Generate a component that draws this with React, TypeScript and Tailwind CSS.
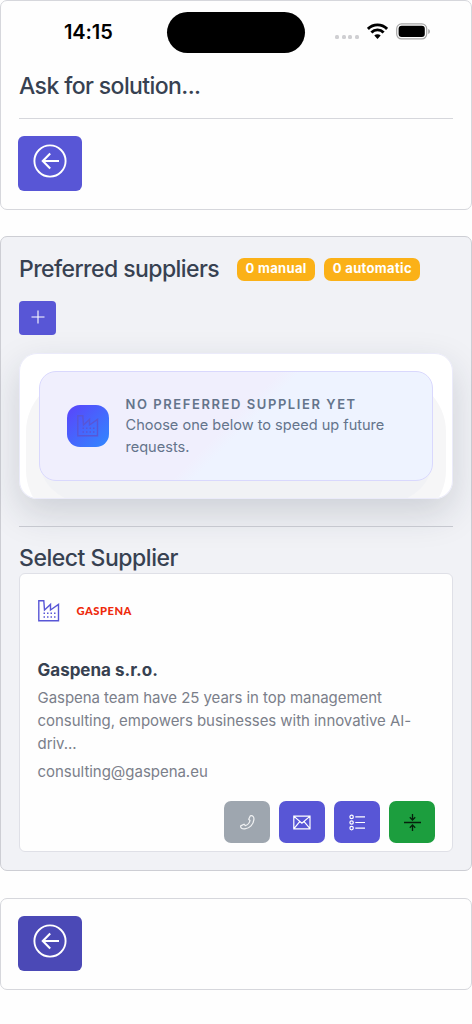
import React from 'react';

interface IconProps {
  className?: string;
}

const FactoryIcon: React.FC<IconProps> = ({ className }) => (
  <svg width="22" height="22" viewBox="0 0 22 22" fill="none" stroke="currentColor" strokeWidth="1.4" className={className}>
    <path d="M.8.8h5l.7 9.2 6-5.6V10l8-5.6v16.3H.8z" />
    <path d="M5.5 13.3h12M5.500 16.900h12" strokeWidth="1.5" strokeDasharray="1.5 2" />
  </svg>
);

const BackIcon: React.FC = () => (
  <svg width="34" height="34" viewBox="0 0 34 34" fill="none" stroke="currentColor" strokeWidth="1.9">
    <circle cx="17" cy="17" r="15.6" />
    <path d="M26 17H9.7M17.2 9.600 9.800 17l7.400 7.400" strokeWidth="2.1" />
  </svg>
);

const PhoneIcon: React.FC = () => (
  <svg width="15" height="15" viewBox="0 0 15 15" fill="none" stroke="currentColor" strokeWidth="1.2" strokeLinejoin="round">
    <path d="M10.2.9C12.600.2 14.200 1.600 13.900 4.600c-.5 4.900-4.200 8.700-9 9.200-2.900.3-4.600-1-4.200-2.900L4 9.200l1.300 1.400C7.500 9.900 9.500 7.900 10 5.500L8.700 4.300z" />
  </svg>
);

const MailIcon: React.FC = () => (
  <svg width="18" height="15" viewBox="0 0 18 15" fill="none" stroke="currentColor" strokeWidth="1.2">
    <path d="M.8 1.200h16.200v12.600H.8zM1 1.400l7.900 6.800 7.900-6.800M1 13.600l5.700-7M17 13.600l-5.900-7" />
  </svg>
);

const ListIcon: React.FC = () => (
  <svg width="16" height="17" viewBox="0 0 16 17" fill="none" stroke="currentColor" strokeWidth="1.2">
    <circle cx="2.6" cy="2.9" r="1.7" />
    <circle cx="2.6" cy="8.5" r="1.7" />
    <circle cx="2.6" cy="14.1" r="1.7" />
    <path d="M6.300 2.900H16M6.300 8.500H16M6.300 14.100H16" />
  </svg>
);

const MergeIcon: React.FC = () => (
  <svg width="17" height="17" viewBox="0 0 17 17" fill="none" stroke="currentColor" strokeWidth="1.3">
    <path d="M0 8.500h17M8.500 0v6M5.800 3.300l2.700 2.800 2.700-2.800M8.500 17v-6M5.800 13.700l2.700-2.800 2.700 2.800" />
  </svg>
);

const StatusBar: React.FC = () => (
  <div className="flex h-[53px] items-start">
    <div className="w-[166px] pt-[19px] pl-[63px] text-[20px] leading-6 font-semibold tracking-[-0.1px] text-black">
      14:15
    </div>
    <div className="mt-[11px] h-[41px] w-[138px] rounded-full bg-black" />
    <div className="ml-[30px] mt-[22px] flex items-start">
      <div className="mt-[12px] flex gap-[2.6px]">
        {[0, 1, 2, 3].map(dot => (
          <span key={dot} className="size-[4px] rounded-[1.5px] bg-[#cfcfd2]" />
        ))}
      </div>
      <svg width="21" height="16" viewBox="0 0 21 16" fill="none" stroke="black" strokeWidth="2.9" className="ml-[8.5px]">
        <path d="M.9 5.900a13.500 13.500 0 0 1 19.200 0" />
        <path d="M4.400 9.500a8.500 8.500 0 0 1 12.200 0" />
        <path d="M10.500 16 7.300 12.600a4.600 4.600 0 0 1 6.400 0z" fill="black" stroke="none" />
      </svg>
      <svg width="35" height="17" viewBox="0 0 35 17" className="ml-[8px]">
        <rect x=".7" y=".9" width="30" height="15" rx="4.8" fill="none" stroke="#a6a6a6" strokeWidth="1.2" />
        <rect x="2.6" y="2.8" width="26.2" height="11.2" rx="3" fill="black" />
        <path d="M32.400 5.900c1.800.8 1.800 4.200 0 5z" fill="#8c8c8c" />
      </svg>
    </div>
  </div>
);

interface ActionButtonProps {
  label: string;
  className: string;
  children: React.ReactNode;
}

const ActionButton: React.FC<ActionButtonProps> = ({ label, className, children }) => (
  <button
    type="button"
    aria-label={label}
    className={`flex h-[42px] w-[46px] items-center justify-center rounded-[7px] ${className}`}
  >
    {children}
  </button>
);

const badges = ['0 manual', '0 automatic'];

export default function App() {
  return (
    <div className="min-h-[1024px] w-[472px] overflow-hidden bg-[#fefefe] font-['Inter',sans-serif] text-[#374151]">
      <header className="h-[210px] rounded-[7px] border border-[#d6d7dc]">
        <StatusBar />
        <div className="px-[18px]">
          <h1 className="mt-[15.500px] text-[23px] leading-8 font-medium tracking-[-0.6px]">Ask for solution...</h1>
          <hr className="mt-[16px] border-[#d6d7dc]" />
          <button
            type="button"
            aria-label="Back"
            className="mt-[17.500px] -ml-px flex h-[55px] w-[64px] items-start justify-center rounded-[6px] bg-[#5856d6] pt-[8px] text-white"
          >
            <BackIcon />
          </button>
        </div>
      </header>

      <main className="mt-[26px] h-[635px] rounded-[7px] border border-[#cdced4] bg-[#f1f2f6] px-[18px]">
        <div className="mt-[16px] flex h-8 items-center">
          <h2 className="w-[218px] text-[23px] leading-8 font-medium tracking-[-0.57px] whitespace-nowrap">Preferred suppliers</h2>
          <div className="flex gap-[9px]">
            {badges.map(badge => (
              <span
                key={badge}
                className="flex h-[23px] items-center rounded-[7px] bg-[#fbb117] px-[8.5px] text-[13px] font-bold tracking-[0.34px] whitespace-nowrap text-white"
              >
                {badge}
              </span>
            ))}
          </div>
        </div>
        <button
          type="button"
          aria-label="Add supplier"
          className="mt-[16px] flex h-[34px] w-[37px] items-start justify-center rounded-[4px] bg-[#5856d6] pt-[9px] text-white"
        >
          <svg width="14" height="14" viewBox="0 0 14 14" stroke="currentColor" strokeWidth="1.1">
            <path d="M7 .5v13M.5 7h13" />
          </svg>
        </button>

        <div className="mt-[18px] h-[146px] rounded-[18px] shadow-[0_14px_36px_0_rgba(30,41,59,0.17)]">
          <div className="relative h-full overflow-hidden rounded-[18px] border border-[#ebebfa] bg-white px-[19px] pt-[17px]">
            {/* soft halo under the empty state */}
            <div className="absolute top-[22px] left-[6px] h-[150px] w-[420px] rounded-[56px] bg-[#f6f6f7]" />
            <div className="absolute top-[50px] left-[19px] h-[98px] w-[394px] rounded-[44px] bg-[#f1f2f5]" />
            <div className="relative flex h-[110px] rounded-[17px] border border-[#d9d8fd] bg-[linear-gradient(135deg,#f0effd_0%,#f0effd_48%,#eef3ff_52%,#eef3ff_100%)]">
              <div className="mt-[33px] ml-[26.500px] flex size-[42px] shrink-0 items-center justify-center rounded-[13px] bg-[linear-gradient(135deg,#5b43fb,#3189ff)]">
                <FactoryIcon className="text-[#5856d6]" />
              </div>
              <div className="mt-[22px] ml-[17px] text-[#64748b]">
                <p className="text-[13px] leading-[20px] font-semibold tracking-[1.57px] whitespace-nowrap">NO PREFERRED SUPPLIER YET</p>
                <p className="text-[14.55px] leading-[22px] whitespace-nowrap">
                  Choose one below to speed up future
                  <br />
                  requests.
                </p>
              </div>
            </div>
          </div>
        </div>

        <hr className="mt-[27px] border-[#c6c8cf]" />
        <h2 className="mt-[16px] pt-px text-[23px] leading-[29px] font-medium tracking-[-0.47px]">Select Supplier</h2>

        <article className="h-[279px] rounded-[6px] border border-[#dfe0e7] bg-[#fefefe] pr-[17px] pl-[17.5px]">
          <div className="mt-[26px] flex h-[22px] items-center">
            <FactoryIcon className="text-[#5856d6]" />
            <span className="ml-[17px] font-['Lato',sans-serif] text-[11.2px] font-black tracking-[0.5px] text-[#ee2a0c]">GASPENA</span>
          </div>
          <h3 className="mt-[35px] text-[17px] leading-[26px] font-bold">Gaspena s.r.o.</h3>
          <p className="mt-[3px] text-[15px] leading-[23px] tracking-[-0.05px] whitespace-nowrap text-[#7b7f8a]">
            Gaspena team have 25 years in top management
            <br />
            consulting, empowers businesses with innovative AI-
            <br />
            driv...
          </p>
          <p className="mt-[5px] text-[15px] leading-[23px] tracking-[-0.03px] text-[#7b7f8a]">consulting@gaspena.eu</p>
          <div className="mt-[18px] flex justify-end gap-[9px]">
            <ActionButton label="Call" className="bg-[#9ea6af] text-white/85">
              <PhoneIcon />
            </ActionButton>
            <ActionButton label="Email" className="bg-[#5856d6] text-white">
              <MailIcon />
            </ActionButton>
            <ActionButton label="Details" className="bg-[#5856d6] text-white">
              <ListIcon />
            </ActionButton>
            <ActionButton label="Select" className="bg-[#1c9e3e] text-[#06210d]">
              <MergeIcon />
            </ActionButton>
          </div>
        </article>
      </main>

      <footer className="mt-[27px] h-[92px] rounded-[7px] border border-[#d6d7dc] px-[18px] pt-[17px]">
        <button
          type="button"
          aria-label="Back"
          className="-ml-px flex h-[55px] w-[64px] items-start justify-center rounded-[6px] bg-[#4b49b6] pt-[8px] text-white"
        >
          <BackIcon />
        </button>
      </footer>
    </div>
  );
}
